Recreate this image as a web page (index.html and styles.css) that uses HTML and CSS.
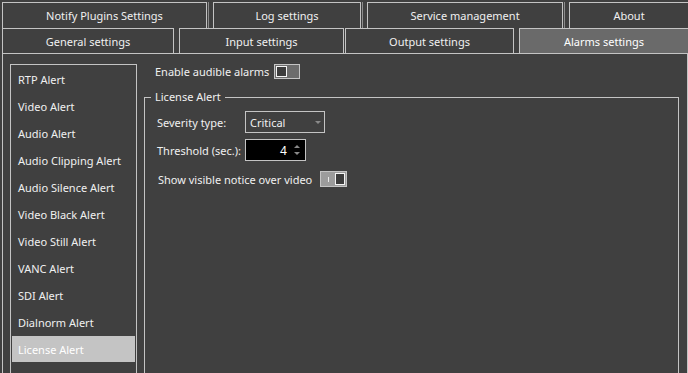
FILE: index.html
```html
<!DOCTYPE html>
<html>
<head>
<meta charset="utf-8">
<title>Alarms settings</title>
<link rel="stylesheet" href="styles.css">
</head>
<body>
<div class="app">
  <div class="tabrow back">
    <div class="tab t-notify">Notify Plugins Settings</div>
    <div class="tab t-log">Log settings</div>
    <div class="tab t-service">Service management</div>
    <div class="tab t-about">About</div>
  </div>
  <div class="tabrow front">
    <div class="tab t-general">General settings</div>
    <div class="tab t-input">Input settings</div>
    <div class="tab t-output">Output settings</div>
    <div class="tab t-alarms selected">Alarms settings</div>
  </div>
  <div class="pane">
    <ul class="alert-list">
      <li>RTP Alert</li>
      <li>Video Alert</li>
      <li>Audio Alert</li>
      <li>Audio Clipping Alert</li>
      <li>Audio Silence Alert</li>
      <li>Video Black Alert</li>
      <li>Video Still Alert</li>
      <li>VANC Alert</li>
      <li>SDI Alert</li>
      <li>Dialnorm Alert</li>
      <li class="active">License Alert</li>
    </ul>
    <div class="detail">
      <div class="enable-row">
        <span class="text">Enable audible alarms</span>
        <div class="toggle off"><span class="knob"></span></div>
      </div>
      <fieldset class="group">
        <legend>License Alert</legend>
        <div class="group-body">
          <div class="field severity">
            <span class="label sev-label">Severity type:</span>
            <div class="combo"><span class="text">Critical</span><span class="combo-arrow"></span></div>
          </div>
          <div class="field threshold">
            <span class="label thr-label">Threshold (sec.):</span>
            <div class="spin">
              <span class="spin-value">4</span>
              <span class="spin-arrows"><span class="up"></span><span class="down"></span></span>
            </div>
          </div>
          <div class="field notice">
            <span class="label notice-label">Show visible notice over video</span>
            <div class="toggle on"><span class="tick"></span><span class="knob"></span></div>
          </div>
        </div>
      </fieldset>
    </div>
  </div>
</div>
</body>
</html>
```
FILE: styles.css
```css
* { box-sizing: border-box; }
html, body { margin: 0; padding: 0; }
body {
  background: #404040;
  color: #f0f0f0;
  font-family: "Noto Sans", "Open Sans", sans-serif;
  font-size: 11px;
  line-height: 16px;
  width: 688px;
  height: 373px;
  overflow: hidden;
}
.app { padding: 2px 0 0 2px; }
.tabrow { display: flex; width: 686px; }
.tab {
  border: 1px solid #c4c4c4;
  border-bottom: none;
  display: flex;
  align-items: center;
  justify-content: center;
  white-space: nowrap;
  padding-top: 1px;
}
.back .tab { height: 26px; box-shadow: 1px 0 0 #404040, 2px 0 0 #8c8c8c; margin-right: 6px; }
.front .tab { height: 25px; }
.t-notify { width: 205px; }
.t-log { width: 148px; }
.t-service { width: 196px; }
.back .t-about { flex: 1; margin-right: 0; border-right: none; box-shadow: none; }
.t-general { width: 172px; margin-right: 5px; }
.t-input { width: 165px; margin-right: 1px; }
.t-output { width: 169px; margin-right: 5px; }
.t-alarms { flex: 1; border-right: none; }
.tab.selected { background: #6a6a6a; color: #ffffff; }

.pane {
  width: 686px;
  height: 320px;
  border: 1px solid #c4c4c4;
  border-bottom: none;
  padding: 10px 0 0 7px;
  display: flex;
  gap: 7px;
}
.alert-list {
  list-style: none;
  margin: 0;
  padding: 1px;
  width: 127px;
  height: 309px;
  border: 1px solid #c4c4c4;
  border-bottom: none;
}
.alert-list li {
  height: 26px;
  margin-bottom: 1px;
  padding: 2px 0 0 6px;
  display: flex;
  align-items: center;
  white-space: nowrap;
}
.alert-list li.active { background: #c4c4c4; color: #ffffff; }

.detail { width: 535px; display: flex; flex-direction: column; }
.enable-row {
  display: flex;
  align-items: center;
  gap: 5px;
  padding-left: 11px;
  height: 15px;
}
.enable-row .text { padding-top: 1px; }
.toggle {
  border: 1px solid #c4c4c4;
  padding: 1px;
  display: flex;
  align-items: stretch;
  position: relative;
}
.toggle .knob {
  width: 11px;
  border: 1px solid #f4f4f4;
  background: #3c3c3c;
}
.toggle.off { width: 26px; height: 15px; background: #6c6c6c; }
.toggle.on { width: 27px; height: 16px; background: #9c9c9c; justify-content: flex-end; }
.toggle.on .knob { width: 10px; }
.toggle .tick {
  position: absolute;
  left: 7px;
  top: 5px;
  width: 1px;
  height: 5px;
  background: #e8e8e8;
}

.group {
  margin: 10px 0 0 0;
  padding: 0;
  border: 1px solid #c4c4c4;
  border-bottom: none;
  height: 290px;
  min-width: 0;
}
.group legend {
  margin-left: 6px;
  padding: 0 4px;
  line-height: 16px;
}
.group-body { padding: 6px 0 0 12px; display: flex; flex-direction: column; }
.field { display: flex; align-items: center; }
.field .label { padding-top: 2px; }
.severity { height: 22px; }
.threshold { height: 22px; margin-top: 6px; }
.notice { height: 16px; margin-top: 10px; }
.sev-label { width: 88px; }
.thr-label { margin-right: 4px; }
.notice-label { margin-right: 8px; padding-left: 1px; }

.combo {
  width: 80px;
  height: 22px;
  border: 1px solid #c4c4c4;
  display: flex;
  align-items: center;
  justify-content: space-between;
  padding: 0 3px 0 4px;
}
.combo .text { padding-top: 2px; }
.combo-arrow {
  width: 0; height: 0;
  border-left: 3px solid transparent;
  border-right: 3px solid transparent;
  border-top: 3px solid #8a8a8a;
}
.spin {
  width: 61px;
  height: 22px;
  border: 1px solid #c4c4c4;
  background: #000000;
  display: flex;
  align-items: center;
  justify-content: flex-end;
  padding-right: 5px;
  color: #ffffff;
}
.spin-value { margin-right: 7px; font-size: 12px; padding-top: 2px; }
.spin-arrows { display: flex; flex-direction: column; gap: 4px; }
.spin-arrows .up, .spin-arrows .down {
  width: 0; height: 0;
  border-left: 3px solid transparent;
  border-right: 3px solid transparent;
}
.spin-arrows .up { border-bottom: 3px solid #8a8a8a; }
.spin-arrows .down { border-top: 3px solid #8a8a8a; }
```
